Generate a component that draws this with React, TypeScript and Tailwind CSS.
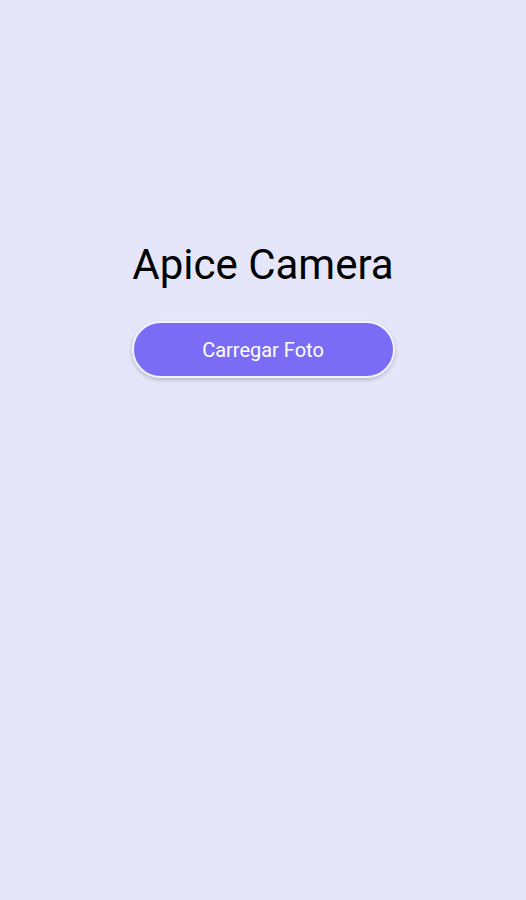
import React from "react";

const App = () => {
  return (
    <div
      className="min-h-[900px] w-full bg-[#e6e6fa] flex flex-col items-center pt-[240px]"
      style={{ fontFamily: "Roboto, 'Noto Sans', sans-serif" }}
    >
      <h1 className="text-[42px] leading-[50px] text-black font-normal">Apice Camera</h1>

      <button className="mt-[31px] w-[263px] h-[57px] rounded-full bg-[#7b6cf6] border-2 border-[#f4f4fc] shadow-[0_2px_4px_rgba(0,0,0,0.2)] text-white text-[20px]">
        Carregar Foto
      </button>
    </div>
  );
};

export default App;
